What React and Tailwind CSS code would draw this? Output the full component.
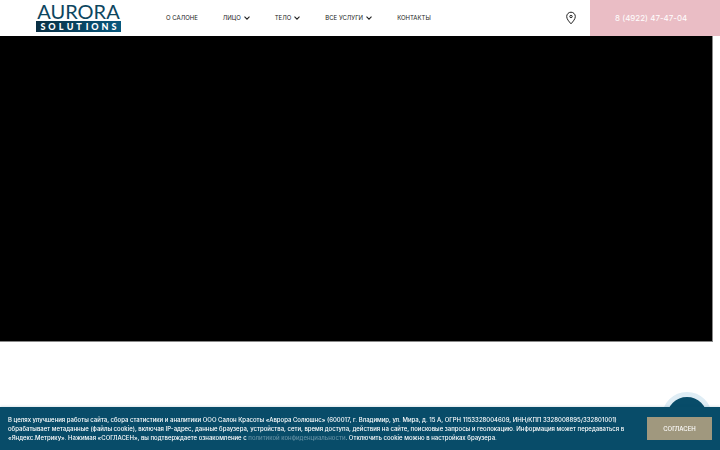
const links = [
  { label: 'О САЛОНЕ' },
  { label: 'ЛИЦО', menu: true },
  { label: 'ТЕЛО', menu: true },
  { label: 'ВСЕ УСЛУГИ', menu: true },
  { label: 'КОНТАКТЫ' },
]

function Logo() {
  return (
    <a href="#" aria-label="Aurora Solutions" className="w-[85px] shrink-0">
      <svg viewBox="0 0 85 36" className="block w-full overflow-visible font-['Lato']" textAnchor="middle">
        <defs>
          <linearGradient id="plate">
            <stop offset="0" stopColor="#0a2f44" />
            <stop offset="1" stopColor="#07587e" />
          </linearGradient>
        </defs>
        <text x="42.5" y="19" fontSize="20" fill="#0d4660">AURORA</text>
        <rect y="21" width="85" height="11" fill="url(#plate)" />
        <text x="7 16 25 34 43 51 59 69 78" y="30" fontSize="9" fontWeight="900" fill="#fff">SOLUTIONS</text>
      </svg>
    </a>
  )
}

function Chevron() {
  return (
    <svg viewBox="0 0 6 4" className="h-1 w-1.5" fill="none" stroke="currentColor" strokeWidth="1.1">
      <path d="M0.5 0.6 3 3.1 5.5 0.6" />
    </svg>
  )
}

function Header() {
  return (
    <header className="flex h-9 bg-white pl-9">
      <Logo />
      <nav className="ml-[45px] flex items-center gap-[25px] text-[6px] leading-3 text-[#222]">
        {links.map((link) => (
          <a key={link.label} href="#" className="flex items-center gap-[3px] whitespace-nowrap">
            {link.label}
            {link.menu && <Chevron />}
          </a>
        ))}
      </nav>
      <a href="#" aria-label="Адрес" className="mr-3 ml-auto flex items-center text-[#222]">
        <svg viewBox="0 0 14 14" className="size-3.5" fill="none" stroke="currentColor">
          <path d="M7 12.8C4.8 10.3 2.7 8 2.7 5.5a4.3 4.3 0 0 1 8.6 0C11.3 8 9.2 10.3 7 12.8Z" strokeWidth="1" />
          <circle cx="7" cy="5.5" r="1.2" strokeWidth="1" />
        </svg>
      </a>
      <a
        href="tel:+74922474704"
        className="flex w-[19%] shrink-0 items-center bg-[#eabdc5] pl-[25px] text-[8px] whitespace-nowrap text-white"
      >
        8 (4922) 47-47-04
      </a>
    </header>
  )
}

function CookieBar() {
  return (
    <div className="relative flex items-center justify-between bg-[#084c69] p-2 shadow-[0_-1px_2px_#084c6922]">
      <p className="text-[6px] leading-[9px] font-medium whitespace-nowrap text-white">
        В целях улучшения работы сайта, сбора статистики и аналитики ООО Салон Красоты «Аврора Солюшнс» (600017, г. Владимир, ул. Мира, д. 15 А, ОГРН 1153328004609, ИНН/КПП 3328008895/332801001)
        <br />
        обрабатывает метаданные (файлы cookie), включая IP-адрес, данные браузера, устройства, сети, время доступа, действия на сайте, поисковые запросы и геолокацию. Информация может передаваться в
        <br />
        «Яндекс.Метрику». Нажимая «СОГЛАСЕН», вы подтверждаете ознакомление с{' '}
        <a href="#" className="text-[#6490a4]">политикой конфиденциальности</a>. Отключить cookie можно в настройках браузера.
      </p>
      <button className="h-[23px] w-[65px] shrink-0 bg-[#a0987e] text-[6px] font-medium text-white">СОГЛАСЕН</button>
    </div>
  )
}

export default function App() {
  return (
    <div className="flex min-h-screen flex-col bg-white font-['Inter',sans-serif]">
      <Header />
      <main className="pr-[7px]">
        <div className="h-[306px] border-r border-b border-[#888] bg-black" />
      </main>
      <div className="fixed inset-x-0 bottom-0">
        <button
          aria-label="Записаться"
          className="absolute right-2 -top-[15px] size-[50px] rounded-full border-[5px] border-[#dfedf5] bg-[#084c69]"
        />
        <CookieBar />
      </div>
    </div>
  )
}
